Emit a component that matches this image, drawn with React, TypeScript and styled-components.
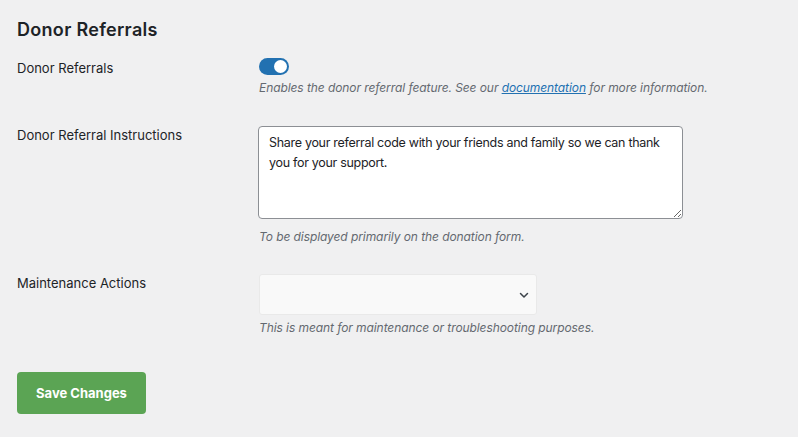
import React from "react";
import styled, { createGlobalStyle } from "styled-components";

const Global = createGlobalStyle`
  html, body { margin: 0; padding: 0; background: #f0f0f1; }
  body { font-family: Inter, "Noto Sans", sans-serif; color: #1d2327; }
  * { box-sizing: border-box; }
`;

const Page = styled.div`
  padding: 18px 17px 20px;
`;

const Title = styled.h2`
  margin: 0 0 17px;
  font-size: 18px;
  line-height: 23px;
  font-weight: 600;
  letter-spacing: 0.3px;
  color: #1d2327;
`;

const Row = styled.div<{ $gap?: number }>`
  display: grid;
  grid-template-columns: 242px 1fr;
  margin-bottom: ${(p) => p.$gap ?? 0}px;
`;

const Label = styled.div<{ $offset?: number }>`
  font-size: 13px;
  line-height: 20px;
  margin-top: ${(p) => p.$offset ?? 0}px;
  color: #1d2327;
`;

const Field = styled.div`
  display: flex;
  flex-direction: column;
  align-items: flex-start;
`;

const Help = styled.p<{ $top: number }>`
  margin: ${(p) => p.$top}px 0 0;
  font-size: 12px;
  line-height: 18px;
  font-style: italic;
  letter-spacing: -0.08px;
  color: #646970;

  a {
    color: #2271b1;
    text-decoration: underline;
  }
`;

const Toggle = styled.span`
  position: relative;
  display: inline-block;
  width: 30px;
  height: 17px;
  border-radius: 9px;
  background: #2271b1;

  &::after {
    content: "";
    position: absolute;
    top: 2px;
    right: 2px;
    width: 13px;
    height: 13px;
    border-radius: 50%;
    background: #fff;
  }
`;

const TextArea = styled.textarea`
  width: 425px;
  height: 93px;
  margin: 0 0 0 -1px;
  padding: 6px 10px;
  font-family: Inter, "Noto Sans", sans-serif;
  font-size: 12.5px;
  letter-spacing: -0.3px;
  line-height: 20px;
  color: #1d2327;
  background: #fff;
  border: 1px solid #8c8f94;
  border-radius: 4px;
  resize: vertical;
  outline: none;
`;

const Select = styled.div`
  width: 278px;
  height: 41px;
  background: #f9f9f9;
  border: 1px solid #e9e9e9;
  border-radius: 3px;
  display: flex;
  align-items: center;
  justify-content: flex-end;
  padding-right: 6px;
`;

const Button = styled.button`
  width: 129px;
  height: 42px;
  border: none;
  border-radius: 4px;
  background: #5ba454;
  color: #fff;
  font-family: Inter, "Noto Sans", sans-serif;
  font-size: 13px;
  font-weight: 700;
  cursor: pointer;
`;

export default function App() {
  return (
    <>
      <Global />
      <Page>
        <Title>Donor Referrals</Title>

        <Row $gap={29}>
          <Label>Donor Referrals</Label>
          <Field>
            <Toggle />
            <Help $top={4}>
              Enables the donor referral feature. See our <a href="#">documentation</a> for more
              information.
            </Help>
          </Field>
        </Row>

        <Row $gap={28}>
          <Label $offset={-1}>Donor Referral Instructions</Label>
          <Field>
            <TextArea
              defaultValue="Share your referral code with your friends and family so we can thank you for your support."
            />
            <Help $top={9}>To be displayed primarily on the donation form.</Help>
          </Field>
        </Row>

        <Row $gap={35}>
          <Label $offset={-1}>Maintenance Actions</Label>
          <Field>
            <Select>
              <svg width="12" height="12" viewBox="0 0 12 12" fill="none">
                <path d="M2.5 4.5 L6 8 L9.5 4.5" stroke="#3c434a" strokeWidth="1.5" strokeLinecap="round" strokeLinejoin="round" />
              </svg>
            </Select>
            <Help $top={4}>This is meant for maintenance or troubleshooting purposes.</Help>
          </Field>
        </Row>

        <Button>Save Changes</Button>
      </Page>
    </>
  );
}
